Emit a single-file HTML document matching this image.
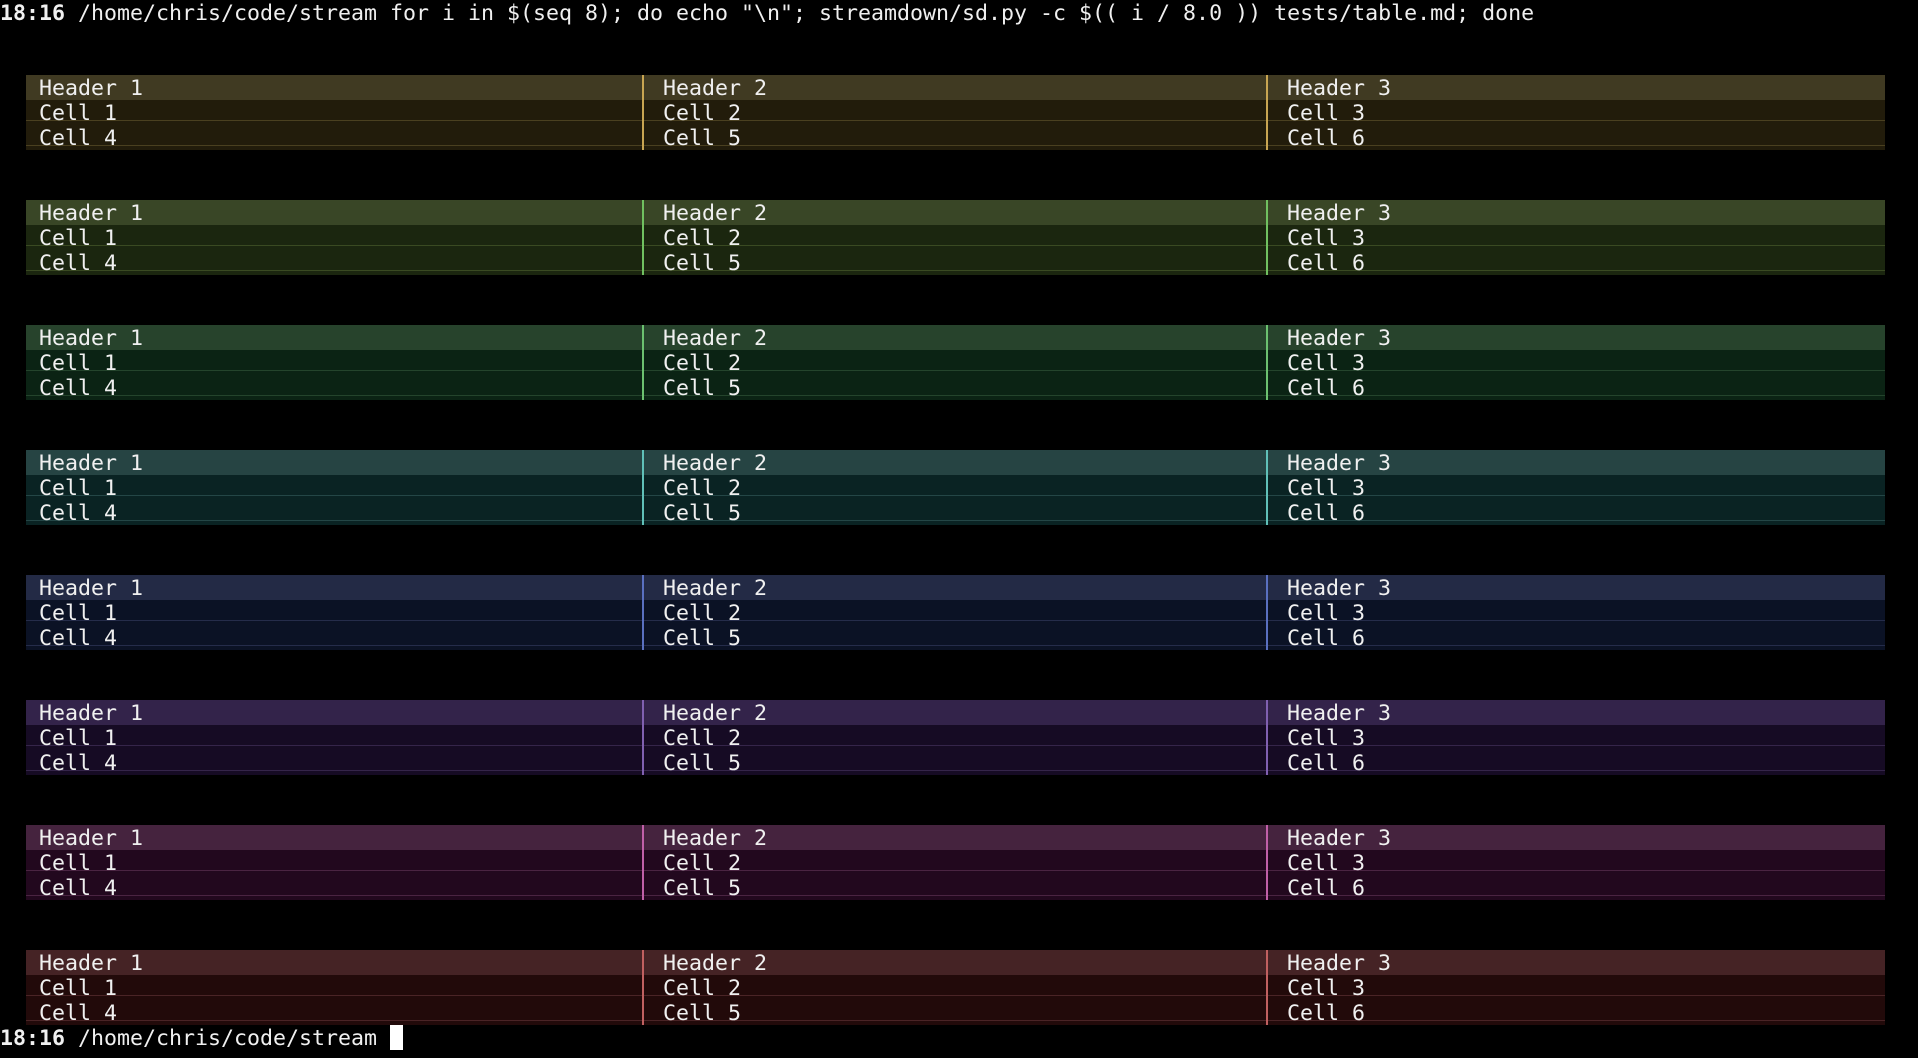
<!DOCTYPE html>
<html><head><meta charset="utf-8"><style>
html,body{margin:0;padding:0;background:#000;width:1918px;height:1058px;overflow:hidden}
body{position:relative;font-family:"DejaVu Sans Mono","Liberation Mono",monospace;font-size:21.6px;color:#f0f0f0}
.ln{position:absolute;left:0;height:25px;line-height:27px;white-space:pre}
.t{position:absolute;left:26px;width:1859px;height:75px}
.h{position:absolute;left:0;top:0;width:100%;height:25px}
.b{position:absolute;left:0;top:25px;width:100%;height:50px}
.r{position:absolute;left:0;width:100%;height:1px}
.d{position:absolute;top:0;width:2px;height:75px}
.c{position:absolute;height:25px;line-height:27px;white-space:pre}
.cur{position:absolute;left:390px;top:1025px;width:13px;height:25px;background:#fff}
</style></head><body>
<div class="ln" style="top:0"><b>18:16</b> /home/chris/code/stream for i in $(seq 8); do echo "\n"; streamdown/sd.py -c $(( i / 8.0 )) tests/table.md; done</div>

<div class="t" style="top:75px"><div class="h" style="background:#403a22"></div><div class="b" style="background:#221c0b"></div><div class="r" style="top:45px;background:#4a4020"></div><div class="r" style="top:70px;background:#4a4020"></div><div class="d" style="left:616px;background:#c8a552"></div><div class="d" style="left:1240px;background:#c8a552"></div><div class="c" style="left:13px;top:0">Header 1</div><div class="c" style="left:637px;top:0">Header 2</div><div class="c" style="left:1261px;top:0">Header 3</div><div class="c" style="left:13px;top:25px">Cell 1</div><div class="c" style="left:637px;top:25px">Cell 2</div><div class="c" style="left:1261px;top:25px">Cell 3</div><div class="c" style="left:13px;top:50px">Cell 4</div><div class="c" style="left:637px;top:50px">Cell 5</div><div class="c" style="left:1261px;top:50px">Cell 6</div></div>

<div class="t" style="top:200px"><div class="h" style="background:#394626"></div><div class="b" style="background:#1b260f"></div><div class="r" style="top:45px;background:#3a4a22"></div><div class="r" style="top:70px;background:#3a4a22"></div><div class="d" style="left:616px;background:#70c060"></div><div class="d" style="left:1240px;background:#70c060"></div><div class="c" style="left:13px;top:0">Header 1</div><div class="c" style="left:637px;top:0">Header 2</div><div class="c" style="left:1261px;top:0">Header 3</div><div class="c" style="left:13px;top:25px">Cell 1</div><div class="c" style="left:637px;top:25px">Cell 2</div><div class="c" style="left:1261px;top:25px">Cell 3</div><div class="c" style="left:13px;top:50px">Cell 4</div><div class="c" style="left:637px;top:50px">Cell 5</div><div class="c" style="left:1261px;top:50px">Cell 6</div></div>

<div class="t" style="top:325px"><div class="h" style="background:#27432c"></div><div class="b" style="background:#0b2314"></div><div class="r" style="top:45px;background:#24442c"></div><div class="r" style="top:70px;background:#24442c"></div><div class="d" style="left:616px;background:#6cc070"></div><div class="d" style="left:1240px;background:#6cc070"></div><div class="c" style="left:13px;top:0">Header 1</div><div class="c" style="left:637px;top:0">Header 2</div><div class="c" style="left:1261px;top:0">Header 3</div><div class="c" style="left:13px;top:25px">Cell 1</div><div class="c" style="left:637px;top:25px">Cell 2</div><div class="c" style="left:1261px;top:25px">Cell 3</div><div class="c" style="left:13px;top:50px">Cell 4</div><div class="c" style="left:637px;top:50px">Cell 5</div><div class="c" style="left:1261px;top:50px">Cell 6</div></div>

<div class="t" style="top:450px"><div class="h" style="background:#264443"></div><div class="b" style="background:#0a2323"></div><div class="r" style="top:45px;background:#244646"></div><div class="r" style="top:70px;background:#244646"></div><div class="d" style="left:616px;background:#60c0b8"></div><div class="d" style="left:1240px;background:#60c0b8"></div><div class="c" style="left:13px;top:0">Header 1</div><div class="c" style="left:637px;top:0">Header 2</div><div class="c" style="left:1261px;top:0">Header 3</div><div class="c" style="left:13px;top:25px">Cell 1</div><div class="c" style="left:637px;top:25px">Cell 2</div><div class="c" style="left:1261px;top:25px">Cell 3</div><div class="c" style="left:13px;top:50px">Cell 4</div><div class="c" style="left:637px;top:50px">Cell 5</div><div class="c" style="left:1261px;top:50px">Cell 6</div></div>

<div class="t" style="top:575px"><div class="h" style="background:#232a45"></div><div class="b" style="background:#0b1225"></div><div class="r" style="top:45px;background:#252c4a"></div><div class="r" style="top:70px;background:#252c4a"></div><div class="d" style="left:616px;background:#5a70c0"></div><div class="d" style="left:1240px;background:#5a70c0"></div><div class="c" style="left:13px;top:0">Header 1</div><div class="c" style="left:637px;top:0">Header 2</div><div class="c" style="left:1261px;top:0">Header 3</div><div class="c" style="left:13px;top:25px">Cell 1</div><div class="c" style="left:637px;top:25px">Cell 2</div><div class="c" style="left:1261px;top:25px">Cell 3</div><div class="c" style="left:13px;top:50px">Cell 4</div><div class="c" style="left:637px;top:50px">Cell 5</div><div class="c" style="left:1261px;top:50px">Cell 6</div></div>

<div class="t" style="top:700px"><div class="h" style="background:#33234a"></div><div class="b" style="background:#160b24"></div><div class="r" style="top:45px;background:#35254a"></div><div class="r" style="top:70px;background:#35254a"></div><div class="d" style="left:616px;background:#8060b0"></div><div class="d" style="left:1240px;background:#8060b0"></div><div class="c" style="left:13px;top:0">Header 1</div><div class="c" style="left:637px;top:0">Header 2</div><div class="c" style="left:1261px;top:0">Header 3</div><div class="c" style="left:13px;top:25px">Cell 1</div><div class="c" style="left:637px;top:25px">Cell 2</div><div class="c" style="left:1261px;top:25px">Cell 3</div><div class="c" style="left:13px;top:50px">Cell 4</div><div class="c" style="left:637px;top:50px">Cell 5</div><div class="c" style="left:1261px;top:50px">Cell 6</div></div>

<div class="t" style="top:825px"><div class="h" style="background:#45233e"></div><div class="b" style="background:#22081e"></div><div class="r" style="top:45px;background:#4a2442"></div><div class="r" style="top:70px;background:#4a2442"></div><div class="d" style="left:616px;background:#c060a8"></div><div class="d" style="left:1240px;background:#c060a8"></div><div class="c" style="left:13px;top:0">Header 1</div><div class="c" style="left:637px;top:0">Header 2</div><div class="c" style="left:1261px;top:0">Header 3</div><div class="c" style="left:13px;top:25px">Cell 1</div><div class="c" style="left:637px;top:25px">Cell 2</div><div class="c" style="left:1261px;top:25px">Cell 3</div><div class="c" style="left:13px;top:50px">Cell 4</div><div class="c" style="left:637px;top:50px">Cell 5</div><div class="c" style="left:1261px;top:50px">Cell 6</div></div>

<div class="t" style="top:950px"><div class="h" style="background:#452325"></div><div class="b" style="background:#220a0a"></div><div class="r" style="top:45px;background:#4a2426"></div><div class="r" style="top:70px;background:#4a2426"></div><div class="d" style="left:616px;background:#c06060"></div><div class="d" style="left:1240px;background:#c06060"></div><div class="c" style="left:13px;top:0">Header 1</div><div class="c" style="left:637px;top:0">Header 2</div><div class="c" style="left:1261px;top:0">Header 3</div><div class="c" style="left:13px;top:25px">Cell 1</div><div class="c" style="left:637px;top:25px">Cell 2</div><div class="c" style="left:1261px;top:25px">Cell 3</div><div class="c" style="left:13px;top:50px">Cell 4</div><div class="c" style="left:637px;top:50px">Cell 5</div><div class="c" style="left:1261px;top:50px">Cell 6</div></div>

<div class="ln" style="top:1025px"><b>18:16</b> /home/chris/code/stream</div>
<div class="cur"></div>
</body></html>
